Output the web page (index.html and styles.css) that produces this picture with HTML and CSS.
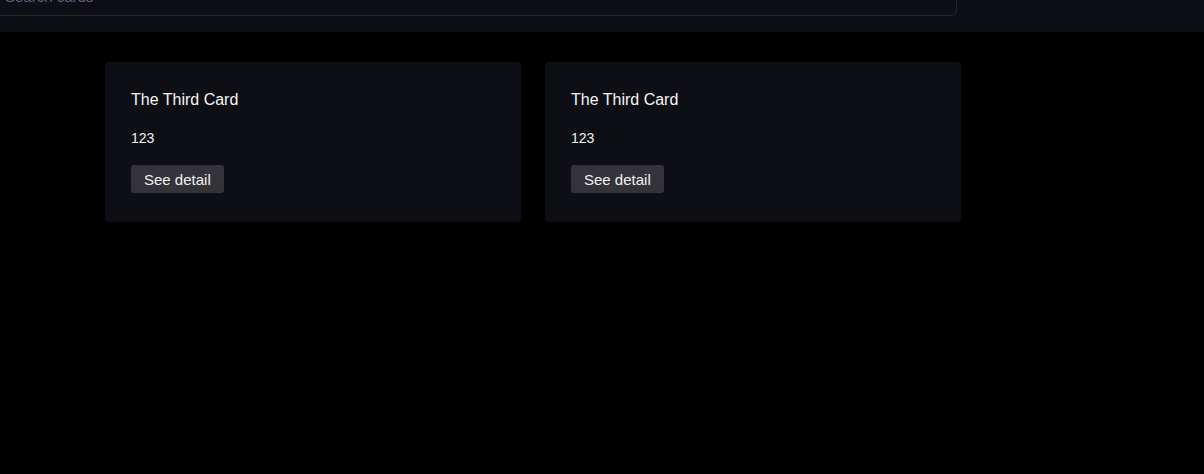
FILE: index.html
```html
<!DOCTYPE html>
<html>
<head>
<meta charset="utf-8">
<link rel="stylesheet" href="styles.css">
</head>
<body>
<header class="topbar">
  <div class="search">
    <input class="search-input" type="text" placeholder="Search cards">
  </div>
</header>
<main class="cards">
  <div class="card">
    <h2 class="card-title">The Third Card</h2>
    <p class="card-value">123</p>
    <button class="card-btn">See detail</button>
  </div>
  <div class="card">
    <h2 class="card-title">The Third Card</h2>
    <p class="card-value">123</p>
    <button class="card-btn">See detail</button>
  </div>
</main>
</body>
</html>
```
FILE: styles.css
```css
html, body {
  margin: 0;
  padding: 0;
  background: #000;
  font-family: "Liberation Sans", Arial, sans-serif;
  color: #f2f2f2;
}
.topbar {
  background: #0e0f14;
  height: 32px;
  display: flex;
  align-items: flex-end;
  padding-bottom: 16px;
  box-sizing: border-box;
}
.search {
  width: 964px;
  margin-left: -7px;
}
.search-input {
  display: block;
  width: 100%;
  box-sizing: border-box;
  height: 40px;
  margin-top: -40px;
  background: #0e0f14;
  border: 1px solid #25262d;
  border-radius: 6px;
  padding: 0 11px;
  font-family: "Liberation Sans", Arial, sans-serif;
  font-size: 15px;
  color: #ddd;
  outline: none;
}
.search-input::placeholder {
  color: #625f80;
}
.cards {
  display: flex;
  gap: 24px;
  padding: 30px 0 0 105px;
}
.card {
  width: 416px;
  height: 160px;
  box-sizing: border-box;
  background: #0e0f14;
  border-radius: 4px;
  padding: 29px 26px 27px;
  display: flex;
  flex-direction: column;
  align-items: flex-start;
}
.card-title {
  margin: 0;
  font-size: 16px;
  font-weight: normal;
  line-height: 18px;
  color: #f5f5f5;
}
.card-value {
  margin: 21px 0 0;
  font-size: 14px;
  line-height: 16px;
}
.card-btn {
  margin-top: 19px;
  height: 28px;
  padding: 0 13px;
  background: #333339;
  border: none;
  border-radius: 3px;
  color: #f2f2f2;
  font-family: "Liberation Sans", Arial, sans-serif;
  font-size: 15px;
}
```
